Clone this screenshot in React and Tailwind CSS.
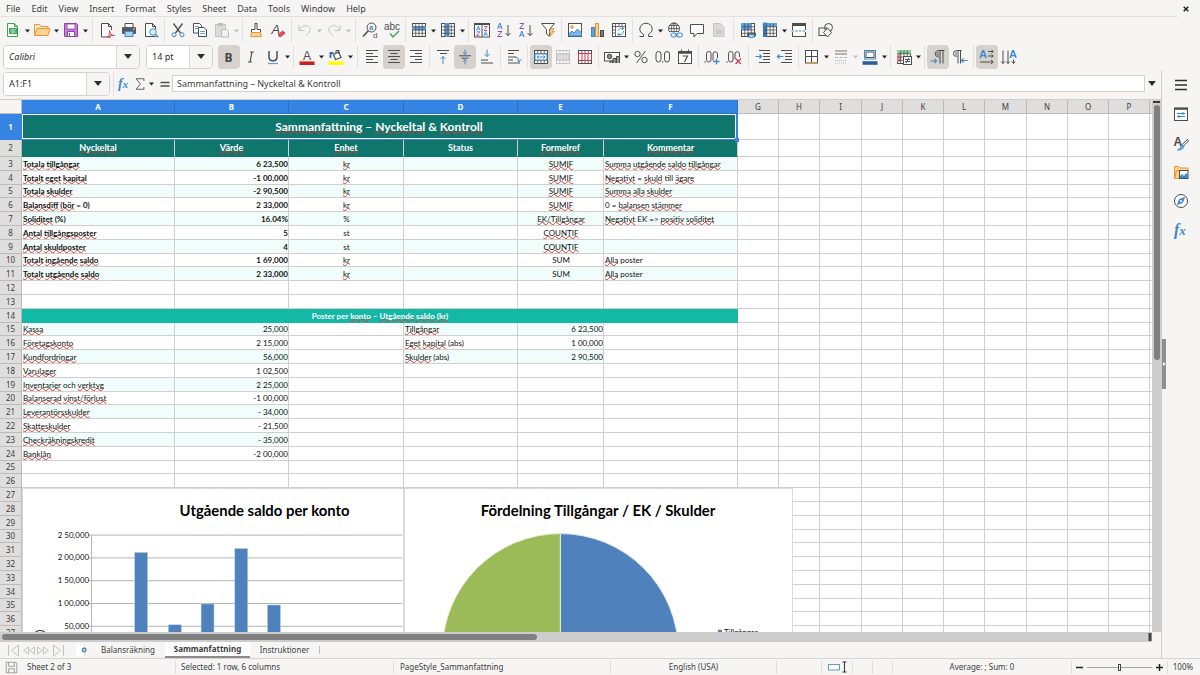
import React from "react";

const INK = "#4d4d4d";
const BLUE = "#3b8ad0";

/* ---------- icons ---------- */

function Svg({ children, size = 16 }) {
  return (
    <svg width={size} height={size} viewBox="0 0 16 16" fill="none" stroke={INK} strokeWidth="1" aria-hidden="true" className="shrink-0 overflow-visible">
      {children}
    </svg>
  );
}

function Txt({ x, y, s = 8, c = INK, w = 400, f = "Liberation Sans, sans-serif", children, ...rest }) {
  return (
    <text x={x} y={y} fontSize={s} fill={c} stroke="none" fontWeight={w} fontFamily={f} {...rest}>
      {children}
    </text>
  );
}

const Table = ({ c = INK, children }) => (
  <>
    <rect x="1.5" y="1.5" width="13" height="13" fill="#fff" stroke={c} />
    {children}
    <path d="M1.5 4.75h13M1.5 8h13M1.5 11.25h13M4.75 1.5v13M8 1.5v13M11.25 1.5v13" stroke={c} strokeWidth=".8" />
  </>
);

const ICONS = {
  newDoc: (
    <>
      <path d="M2.5 1.5h7l3 3v10h-10z" fill="#fff" stroke="#3aa757" />
      <path d="M9.5 1.5v3h3" fill="#8fd3a0" stroke="#3aa757" />
      <rect x="4" y="6" width="8" height="6" fill="#3aa757" stroke="none" />
      <path d="M5 8h6M5 10h6M8 6.500v5" stroke="#d6f1dc" strokeWidth=".7" />
    </>
  ),
  open: (
    <>
      <path d="M.5 13.500v-11h5l1.500 2h7v2" fill="#fbe3bd" stroke="#e8953a" />
      <path d="M.5 13.500l2.500-7h13l-2 7z" fill="#fad38f" stroke="#e8953a" />
    </>
  ),
  save: (
    <>
      <path d="M1.500 1.500h12l1 1v12h-13z" fill="#c47fd6" stroke="#953fae" />
      <rect x="4" y="2" width="8" height="5" fill="#fff" stroke="#953fae" strokeWidth=".8" />
      <path d="M4.500 14.500v-5h7v5z" fill="#fff" stroke="#953fae" />
      <path d="M6.500 11v3" stroke="#953fae" />
    </>
  ),
  pdf: (
    <>
      <path d="M12 15H2.500V1.500h7l3 3V8" fill="#fff" />
      <path d="M9.500 1.500v3h3" />
      <path d="M8 15.500c3-3 3-5 2.500-7 0 3 2 5 5 5-3-.5-5 .5-7.500 2z" fill="#f9c7cd" stroke="#d8344a" strokeWidth=".9" />
    </>
  ),
  print: (
    <>
      <path d="M4 5V1.500h8V5" fill="#fff" />
      <rect x="1" y="5" width="14" height="7" rx="1" fill="#5a5a5a" stroke="none" />
      <rect x="4" y="9.500" width="8" height="5" fill="#a9d1f2" stroke={BLUE} />
      <path d="M12 7h1.500" stroke="#fff" />
    </>
  ),
  preview: (
    <>
      <path d="M13 14.500H2.500v-13h7l3 3V7" fill="#fff" />
      <path d="M9.500 1.500v3h3" />
      <circle cx="10" cy="10" r="3.200" fill="#e4f1fc" stroke={BLUE} />
      <path d="M12.300 12.300l3 3" stroke={BLUE} strokeWidth="1.300" />
    </>
  ),
  cut: (
    <>
      <path d="M3.500 1.500l7 9.500M12.500 1.500l-7 9.500" strokeWidth="1.300" />
      <circle cx="4" cy="12.700" r="2" stroke={BLUE} />
      <circle cx="12" cy="12.700" r="2" stroke={BLUE} />
    </>
  ),
  copy: (
    <>
      <path d="M1.500 1.500h6l2 2v7.500h-8z" fill="#fff" />
      <path d="M6.500 5.500h5.500l2.500 2.500v6.500h-8z" fill="#fff" />
      <path d="M3 4.500h4M3 6.500h3M8 9.500h5M8 11.500h5" stroke={BLUE} strokeWidth=".8" />
    </>
  ),
  paste: (
    <>
      <rect x="1.500" y="2.500" width="10" height="12" fill="#dcdcdc" stroke="#c3c3c3" />
      <rect x="4" y="1" width="5" height="3" fill="#bbb" stroke="none" />
      <path d="M7.500 7.500h5l2 2v5.500h-7z" fill="#f2f2f2" stroke="#b9b9b9" />
    </>
  ),
  brush: (
    <>
      <path d="M7 1.500h2v6h3.500v3h-9v-3H7z" fill="#fff" />
      <path d="M2.500 14.500l1-4h9l1 4z" fill="#fad38f" stroke="#e8953a" />
    </>
  ),
  clear: (
    <>
      <Txt x="1.500" y="12" s="13" fontStyle="italic">A</Txt>
      <path d="M8.500 12.500l4-3.500 2.500 2-4 3.500h-2z" fill="#e8545d" stroke="#c9303b" strokeWidth=".8" />
    </>
  ),
  undo: <path d="M2 3v5.500h5.500M2.500 8c2-4 6-5.500 9-3.500s2 6-3 9.500" stroke="#c4c4c4" />,
  redo: <path d="M14 3v5.500H8.500M13.500 8c-2-4-6-5.500-9-3.500s-2 6 3 9.500" stroke="#c4c4c4" />,
  find: (
    <>
      <circle cx="9.500" cy="5.500" r="4.500" />
      <path d="M6.300 8.700L1 14.500" strokeWidth="1.600" />
      <Txt x="7.300" y="7.500" s="7" c={BLUE} w="700">a</Txt>
      <Txt x="11" y="15.500" s="8">d</Txt>
    </>
  ),
  spell: (
    <>
      <Txt x="0" y="8" s="10">abc</Txt>
      <path d="M6 11.500l3 3.500 6-6" stroke="#32a852" strokeWidth="1.400" />
    </>
  ),
  row: <Table><rect x="1" y="4.500" width="14" height="3.800" fill="#5ba4e6" stroke="none" /></Table>,
  col: <Table><rect x="5" y="1" width="4.500" height="14" fill="#5ba4e6" stroke="none" /></Table>,
  sort: (
    <>
      <rect x=".5" y="1.500" width="15" height="13.500" fill="#fff" />
      <path d="M.5 2h15" strokeWidth="2" />
      <path d="M8 2v13" />
      <path d="M2.500 8.500l1.800-4.500 1.800 4.500M3 7h2.600M9.800 13.800l1.800-4.300 1.800 4.300M10.300 12.400h2.600" stroke={BLUE} strokeWidth=".9" />
      <path d="M2.500 9.800h3.300l-3.300 4h3.300M10 4.500h3.300l-3.300 4h3.300" stroke="#a347ba" strokeWidth=".9" />
    </>
  ),
  az: (
    <>
      <path d="M1.500 7l2.300-6 2.300 6M2.200 5h3.200" stroke={BLUE} />
      <path d="M1.700 9.500h4.200l-4.200 5h4.400" stroke="#a347ba" />
      <path d="M12 3v10.500M9.500 11l2.500 2.700 2.500-2.700" />
    </>
  ),
  za: (
    <>
      <path d="M1.700 1.500h4.200l-4.200 5h4.400" stroke="#a347ba" />
      <path d="M1.500 15l2.300-6 2.300 6M2.200 13h3.200" stroke={BLUE} />
      <path d="M12 3v10.500M9.500 11l2.500 2.700 2.500-2.700" />
    </>
  ),
  filter: (
    <>
      <path d="M1.500 1.500h13l-5 6v7l-3-2.500v-4.500z" fill="#fff" />
      <path d="M11.500 6.500l-2.500 4h2l-1.500 4.500 5-5.500h-2.500l2-3z" fill="#fad38f" stroke="#e8953a" strokeWidth=".9" />
    </>
  ),
  image: (
    <>
      <rect x="1.500" y="1.500" width="13" height="13" fill="#fff" />
      <circle cx="5" cy="5" r="1.300" fill="#fad38f" stroke="#e8953a" />
      <path d="M2 14v-2l3-3 2 2 3.500-4 4 4v3z" fill="#7db7ea" stroke={BLUE} />
    </>
  ),
  chart: (
    <>
      <rect x="2.500" y="5.500" width="3" height="9" fill="#5ba4e6" stroke={BLUE} />
      <rect x="6.500" y="1.500" width="3" height="13" fill="#fad38f" stroke="#e8953a" />
      <rect x="11.500" y="8.500" width="3" height="6" fill="#777" />
    </>
  ),
  pivot: (
    <>
      <rect x="1.500" y="1.500" width="13" height="13" fill="#fff" />
      <path d="M1.500 4.500h13M4.500 1.500v13M8 1.500v3M11 1.500v3M1.500 8h3M1.500 11h3" strokeWidth=".8" />
      <path d="M7 8.500c.5-1.500 2-2 3.500-2h2M11 5l1.800 1.500L11 8M12.500 9c0 2-1.500 3.500-3.500 3.500H7M8.500 10.800L6.800 12.500l1.700 1.700" stroke={BLUE} />
    </>
  ),
  omega: <path d="M1.500 14.500h4v-2.200C3 11 1.800 9.300 1.800 7a6 5.600 0 0 1 12.400 0c0 2.300-1.200 4-3.700 5.300v2.200h4" />,
  link: (
    <>
      <circle cx="7" cy="6.500" r="5.500" />
      <path d="M1.500 6.500h11M7 1v11M2.500 3.500h9M2.500 9.500h9" strokeWidth=".8" />
      <ellipse cx="7" cy="6.500" rx="2.700" ry="5.500" strokeWidth=".8" />
      <rect x="3" y="10" width="13" height="6" fill="#f6f5f4" stroke="none" />
      <rect x="4" y="11" width="5.500" height="4" rx="2" stroke={BLUE} />
      <rect x="9.500" y="11" width="6" height="4" rx="2" stroke={BLUE} />
      <path d="M7.500 13h4" stroke={BLUE} />
    </>
  ),
  comment: <path d="M1.500 2.500h13v9H8l-3 3.500v-3.500H1.500z" fill="#fff" />,
  page: (
    <>
      <path d="M2.500 1.500h7l3.500 3.500v9.500H2.500z" fill="#dadada" stroke="#c6c6c6" />
      <path d="M5 9h6M5 11h6" stroke="#b9b9b9" />
    </>
  ),
  printArea: (
    <>
      <Table><rect x="1" y="1" width="10" height="7" fill="#5ba4e6" stroke="none" /></Table>
      <rect x="7" y="10.500" width="9" height="4" rx="1" fill="#5a5a5a" stroke="none" />
      <rect x="9" y="12.500" width="5" height="3" fill="#a9d1f2" stroke={BLUE} strokeWidth=".8" />
    </>
  ),
  freeze: (
    <>
      <Table>
        <rect x="1" y="1" width="14" height="3.800" fill="#5ba4e6" stroke="none" />
        <rect x="1" y="1" width="3.800" height="14" fill="#2f7ecb" stroke="none" />
      </Table>
      <path d="M3 0v6M.5 2.500h5M1 .5l4 4M5 .5l-4 4" stroke={BLUE} strokeWidth=".8" />
    </>
  ),
  split: (
    <>
      <rect x="1.500" y="2" width="13" height="12.500" fill="#fff" />
      <path d="M1 2.500h14" strokeWidth="3" />
      <path d="M1 9h14" stroke="#fff" strokeWidth="2" />
      <path d="M.5 9h15" stroke={BLUE} strokeDasharray="2.500 1.200" />
    </>
  ),
  shapes: (
    <>
      <rect x="1" y="6" width="8" height="7.500" />
      <circle cx="10.500" cy="5.500" r="4" />
      <path d="M9.500 6l4 4.500-4 4.500-4-4.500z" fill="#f6f5f4" />
    </>
  ),
  bold: <Txt x="3.500" y="12.500" s="12" w="700" c="#444" f="Noto Sans, sans-serif">B</Txt>,
  italic: <path d="M7 3h4M5 13h4M9 3L7 13" strokeWidth="1.200" />,
  underline: (
    <>
      <path d="M4 2v6c0 5 8 5 8 0V2" strokeWidth="1.500" />
      <path d="M3 14.500h10" stroke="#5ba4e6" strokeWidth="1.300" />
    </>
  ),
  fontColor: (
    <>
      <Txt x="4" y="10.500" s="12">A</Txt>
      <path d="M.5 14.200h15" stroke="#c9211e" strokeWidth="3.600" />
    </>
  ),
  fill: (
    <>
      <path d="M2.500 9V4h3" stroke="#2b6fb3" strokeWidth="1.800" />
      <path d="M5.500 5.500l5-2.500 2.500 5.500-5.500 2z" fill="#fff" strokeWidth="1.200" />
      <path d="M8 4V1.500h3V5" />
      <path d="M.5 14.200h15" stroke="#ffff00" strokeWidth="3.600" />
    </>
  ),
  alignL: <path d="M2 1.500h12M2 4.500h7M2 7.500h12M2 10.500h7M2 13.500h12" strokeWidth="1.100" />,
  alignC: <path d="M2 1.500h12M4.500 4.500h7M2 7.500h12M4.500 10.500h7M2 13.500h12" strokeWidth="1.100" />,
  alignR: <path d="M2 1.500h12M7 4.500h7M2 7.500h12M7 10.500h7M2 13.500h12" strokeWidth="1.100" />,
  vTop: (
    <>
      <path d="M2 1.500h12M5 4.500h7" />
      <path d="M8 15V7.500M5.500 10L8 7.500l2.500 2.500" stroke={BLUE} />
    </>
  ),
  vMid: (
    <>
      <path d="M2 6.800h12M4.500 9.200h7" />
      <path d="M8 .5v5M6 3.500l2 2 2-2M8 15.500v-5M6 12.500l2-2 2 2" stroke={BLUE} />
    </>
  ),
  vBot: (
    <>
      <path d="M2 14h12M2 11h7" />
      <path d="M8 .5v7M5.500 5L8 7.500 10.500 5" stroke={BLUE} />
    </>
  ),
  wrap: (
    <>
      <path d="M2 1.500h11M2 4.500h6M2 8h8M2 11h5M2 14h12" />
      <path d="M9 8c3 0 4 2 4 4.500M10.800 10.500l2.200 2.500 2.200-2.500" stroke={BLUE} />
    </>
  ),
  merge: (
    <>
      <Table />
      <rect x="2" y="5" width="12" height="6" fill="#fff" stroke={BLUE} />
      <path d="M4 8h8M5.500 6.500L4 8l1.500 1.500M10.500 6.500L12 8l-1.500 1.500" stroke={BLUE} />
    </>
  ),
  mergeOff: (
    <>
      <Table c="#c3c3c3" />
      <rect x="2" y="5" width="12" height="6" fill="#dcdcdc" stroke="#c3c3c3" />
    </>
  ),
  unmerge: (
    <>
      <Table />
      <rect x="1.500" y="4.500" width="13" height="7" fill="#fff" stroke="#d8344a" />
      <path d="M5 4.500v7M8 4.500v7M11 4.500v7" stroke="#d8344a" />
    </>
  ),
  money: (
    <>
      <rect x=".5" y="3.500" width="15" height="8.500" fill="#fff" />
      <circle cx="5.500" cy="7.500" r="2.300" fill="#888" />
      <path d="M9 14V9.500h3V14M12.500 14V7.500h3V14M6 14v-2h3v2" fill="#999" />
    </>
  ),
  percent: (
    <>
      <circle cx="4.500" cy="5" r="2.700" />
      <circle cx="11.500" cy="11" r="2.700" />
      <path d="M12.500 2l-9 12" />
    </>
  ),
  decimal: (
    <>
      <rect x="1" y="2.500" width="5" height="10.500" rx="2.500" />
      <rect x="9.500" y="2.500" width="5" height="10.500" rx="2.500" />
      <path d="M7.300 13h1" strokeWidth="1.300" />
    </>
  ),
  date: (
    <>
      <rect x="1.500" y="2.500" width="13" height="12" fill="#fff" />
      <path d="M1.500 3.500h13" strokeWidth="2.500" />
      <path d="M4.500 .5v3M11.500 .5v3" />
      <path d="M5.500 7h5L7.500 13" strokeWidth="1.200" />
    </>
  ),
  addDec: (
    <>
      <path d="M.5 13h1" strokeWidth="1.300" />
      <rect x="2.500" y="2.500" width="4.500" height="10.500" rx="2.200" />
      <path d="M13.500 9V5a2.200 2.200 0 0 0-4.500 0v5.500c0 1 .5 2 1.200 2.300" />
      <path d="M12.500 9.500v6M9.500 12.500h6" stroke={BLUE} strokeWidth="1.300" />
    </>
  ),
  delDec: (
    <>
      <path d="M.5 13h1" strokeWidth="1.300" />
      <rect x="2.500" y="2.500" width="4.500" height="10.500" rx="2.200" />
      <path d="M13.500 8V5a2.200 2.200 0 0 0-4.500 0v5" />
      <path d="M9.500 9.500l5.500 5.500M15 9.500L9.500 15" stroke="#d8344a" strokeWidth="1.200" />
    </>
  ),
  indent: (
    <>
      <path d="M4 1.500h11M8 4.500h7M8 7.500h7M8 10.500h7M4 13.500h11" />
      <path d="M.5 7.500h6M4.500 5.500l2 2-2 2" stroke={BLUE} strokeWidth="1.200" />
    </>
  ),
  outdent: (
    <>
      <path d="M4 1.500h11M8 4.500h7M8 7.500h7M8 10.500h7M4 13.500h11" />
      <path d="M6.500 7.500h-6M2.500 5.500l-2 2 2 2" stroke={BLUE} strokeWidth="1.200" />
    </>
  ),
  borders: (
    <>
      <rect x="1.500" y="1.500" width="12" height="12.500" fill="#fff" />
      <path d="M7.500 1.500v12M1.500 7.500h12" />
      <path d="M1.500 14h12" stroke="#e8953a" />
    </>
  ),
  lineStyle: (
    <>
      <path d="M2 2h12M2 5h12" stroke="#b3b3b3" strokeWidth="1.800" />
      <path d="M2 8.500h12" stroke="#b3b3b3" strokeDasharray="3 1.500" />
      <path d="M2 11.500h12M2 14h12" stroke="#b3b3b3" strokeDasharray="1 1" />
    </>
  ),
  lineColor: (
    <>
      <path d="M.5 14h15" stroke="#2a6099" strokeWidth="3.600" />
      <rect x="2.500" y="1.500" width="11" height="8.500" fill="#fff" stroke={BLUE} />
      <rect x="4" y="3" width="8" height="5.500" />
    </>
  ),
  conditional: (
    <>
      <Table>
        <rect x="1" y="1" width="14" height="4" fill="#8fd3a0" stroke="none" />
        <rect x="1" y="5" width="4" height="8" fill="#ee8b93" stroke="none" />
      </Table>
      <rect x="7.500" y="7.500" width="8" height="8" fill="#fff" />
      <path d="M9 10.500h5M9 12.500h5M13 9l-3 5" />
    </>
  ),
  ltr: (
    <>
      <path d="M14.500 1.500h-6a3 3 0 0 0 0 6.500h1M10 1.500v13M13 1.500v13" />
      <path d="M6 2.500v5h3v-5z" fill="#999" stroke="none" />
      <path d="M.5 12h6M4.500 10l2 2-2 2" stroke={BLUE} strokeWidth="1.200" />
    </>
  ),
  rtl: (
    <>
      <path d="M9.500 1.500h-5a3 3 0 0 0 0 6h1M6 1.500v13M8.500 1.500v13" />
      <path d="M3 2.500h3v5H3z" fill="#aaa" stroke="none" />
      <path d="M15.500 11.500h-6M11.500 9.500l-2 2 2 2" stroke={BLUE} strokeWidth="1.200" />
    </>
  ),
  horiz: (
    <>
      <Txt x="0" y="9" s="11" c={BLUE} w="700">A</Txt>
      <path d="M9 2.500h5M9 7h5M12.500 1l1.800 1.500-1.800 1.500M12.500 5.500L14.300 7l-1.800 1.500M1 13h13M12 11l2.300 2-2.300 2" />
    </>
  ),
  vert: (
    <>
      <Txt x="8" y="9" s="11" c={BLUE} w="700">A</Txt>
      <path d="M2 1.500v13M.3 12.500L2 14.500l1.700-2M7 1.500v13M5.300 12.500l1.700 2 1.700-2M12.500 10.500v4M10.800 12.500l1.700 2 1.700-2" />
    </>
  ),
  menu: <path d="M2 3.500h12M2 8h12M2 12.500h12" stroke="#2e2e2e" strokeWidth="1.500" />,
  properties: (
    <>
      <rect x="1.500" y="2" width="13" height="12.500" fill="#fff" />
      <path d="M1 2.800h14" strokeWidth="2" />
      <path d="M4 7.500h8M4 10.500h8M10 6v3M6 9v3" stroke={BLUE} />
    </>
  ),
  stylesPanel: (
    <>
      <Txt x=".5" y="11" s="12" w="700">A</Txt>
      <path d="M14.500 4.500L9 9.500l1.500 1.500L15.500 6z" fill="#fff" />
      <path d="M4.500 15c3 0 3-5 5-5s2.500 5-5 5z" fill="#7db7ea" stroke={BLUE} />
    </>
  ),
  gallery: (
    <>
      <path d="M1.500 14.500v-12h4l1.500 1.500h8v3" fill="#fad38f" stroke="#e8953a" />
      <path d="M1.500 14.500l2-8h4v8z" fill="#fad38f" stroke="#e8953a" />
      <rect x="6.500" y="6.500" width="8.500" height="8" fill="#fff" />
      <path d="M7 14v-2l2-2 2 2 2-3 2 2v3z" fill="#3b8ad0" stroke="none" />
    </>
  ),
  navigator: (
    <>
      <circle cx="8" cy="8" r="6.500" fill="#fff" />
      <path d="M11.500 4.500L9.500 9.500 4.500 11.500 6.500 6.500z" fill={BLUE} stroke={BLUE} />
      <circle cx="8" cy="8" r="1" fill="#fff" stroke="none" />
    </>
  ),
  fx: (
    <Txt x="1" y="12.500" s="16" c={BLUE} f="Liberation Serif, serif" fontStyle="italic" w="700">
      f<tspan fontSize="13">x</tspan>
    </Txt>
  ),
  sigma: <path d="M12.500 4.500V2H3.500l5 6-5 6h9v-2.500" />,
  equals: <path d="M2 6h12M2 10.500h12" strokeWidth="2" />,
  addSheet: (
    <>
      <path d="M1 1h7l3 3v11H1z" fill="#fff" stroke="none" />
      <path d="M11 4v11" stroke="#bbb" strokeWidth=".7" />
      <circle cx="10.500" cy="8" r="2.800" fill="#3b6fb8" stroke="none" />
      <path d="M8.700 8h3.600M10.500 6.200v3.600" stroke="#fff" strokeWidth=".9" />
    </>
  ),
};

function IconButton({ name, label, active, disabled }) {
  return (
    <button
      type="button"
      aria-label={label}
      aria-pressed={active ? true : undefined}
      disabled={disabled}
      className={"flex h-6 w-[22px] shrink-0 items-center justify-center rounded " + (active ? "bg-[#d5d1cd]" : "")}
    >
      <Svg>{ICONS[name]}</Svg>
    </button>
  );
}

function Caret({ label, disabled }) {
  return (
    <button type="button" aria-label={label + " options"} disabled={disabled} className="flex h-6 w-[7px] shrink-0 items-center justify-center">
      <svg width="5" height="4" viewBox="0 0 5 4" aria-hidden="true" className="mt-px">
        <path d="M0 .5h5L2.500 3.500z" fill={disabled ? "#bdbdbd" : "#222"} />
      </svg>
    </button>
  );
}

function Sep({ wide }) {
  return (
    <span className={"flex h-6 shrink-0 justify-center " + (wide ? "w-[7px]" : "w-[5px]")}>
      <span className="w-px bg-[#e3e1df]" />
    </span>
  );
}

/* Each entry: [icon, label, flags]; flags: c = caret, a = active, d = disabled */
function Tools({ items }) {
  return items.map((it, i) => {
    if (it === "|") return <Sep key={i} />;
    if (it === "||") return <Sep key={i} wide />;
    const [name, label, flags = ""] = it;
    const disabled = flags.includes("d");
    return (
      <React.Fragment key={i}>
        <IconButton name={name} label={label} active={flags.includes("a")} disabled={disabled} />
        {flags.includes("c") && <Caret label={label} disabled={disabled} />}
      </React.Fragment>
    );
  });
}

const STANDARD = [
  ["newDoc", "New", "c"], ["open", "Open", "c"], ["save", "Save", "c"], "||",
  ["pdf", "Export as PDF"], ["print", "Print"], ["preview", "Print Preview"], "|",
  ["cut", "Cut"], ["copy", "Copy"], ["paste", "Paste", "cd"], "|",
  ["brush", "Clone Formatting"], ["clear", "Clear Formatting"], "|",
  ["undo", "Undo", "cd"], ["redo", "Redo", "cd"], "||",
  ["find", "Find and Replace"], ["spell", "Spelling"], "|",
  ["row", "Row", "c"], ["col", "Column", "c"], "|",
  ["sort", "Sort"], ["az", "Sort Ascending"], ["za", "Sort Descending"], ["filter", "AutoFilter"], "|",
  ["image", "Insert Image"], ["chart", "Insert Chart"], ["pivot", "Insert Pivot Table"], "|",
  ["omega", "Special Characters", "c"], ["link", "Insert Hyperlink"], ["comment", "Insert Comment"], ["page", "Headers and Footers", "d"], "||",
  ["printArea", "Print Area"], ["freeze", "Freeze Panes", "c"], ["split", "Split Window"], "|",
  ["shapes", "Show Draw Functions"],
];

const FORMATTING = [
  ["bold", "Bold", "a"], ["italic", "Italic"], ["underline", "Underline", "c"], "|",
  ["fontColor", "Font Color", "c"], ["fill", "Background Color", "c"], "||",
  ["alignL", "Align Left"], ["alignC", "Align Center", "a"], ["alignR", "Align Right"], "|",
  ["vTop", "Align Top"], ["vMid", "Center Vertically", "a"], ["vBot", "Align Bottom"], "|",
  ["wrap", "Wrap Text"], "|",
  ["merge", "Merge and Center", "a"], ["mergeOff", "Merge Cells", "d"], ["unmerge", "Unmerge Cells"], "|",
  ["money", "Currency", "c"], ["percent", "Percent"], ["decimal", "Number"], ["date", "Date"], "|",
  ["addDec", "Add Decimal Place"], ["delDec", "Delete Decimal Place"], "||",
  ["indent", "Increase Indent"], ["outdent", "Decrease Indent"], "|",
  ["borders", "Borders", "c"], ["lineStyle", "Border Style", "cd"], ["lineColor", "Border Color", "c"], "|",
  ["conditional", "Conditional Formatting", "c"], "|",
  ["ltr", "Left-To-Right", "a"], ["rtl", "Right-To-Left"], "|",
  ["horiz", "Text direction left to right", "a"], ["vert", "Text direction top to bottom"],
];

function Combo({ label, value, italic, width }) {
  return (
    <div className={"flex h-6 shrink-0 overflow-hidden rounded border border-[#d3d0cd] bg-white " + width}>
      <input aria-label={label} defaultValue={value} className={"min-w-0 flex-1 bg-white px-[5px] text-[9px] text-[#2e2e2e] outline-none " + (italic ? "italic" : "")} />
      <button type="button" aria-label={label + " list"} className="flex w-[23px] shrink-0 items-center justify-center border-l border-[#d9d6d3] bg-[#f6f5f4]">
        <svg width="8" height="5" viewBox="0 0 8 5" aria-hidden="true"><path d="M0 0h8L4 5z" fill="#2e2e2e" /></svg>
      </button>
    </div>
  );
}

/* ---------- sheet data ---------- */

const KNOWN = new Set(["=", "=>", "0", "0)", "(%)", "till", "och", "–", "&", "per", "(abs)", "poster", "Poster", "SUM", "st", "%", "Status", "EK"]);

function Spell({ text }) {
  return text.split(" ").map((word, i) => (
    <React.Fragment key={i}>
      {i > 0 && " "}
      {KNOWN.has(word) || /^[-\d,.%]+$/.test(word) ? (
        word
      ) : (
        <span className="underline decoration-[#e0342b] decoration-wavy decoration-1 [text-decoration-skip-ink:none] [text-underline-offset:-1px]">{word}</span>
      )}
    </React.Fragment>
  ));
}

const DATA = {
  3: ["Totala tillgångar", "6 23,500", "kr", "", "SUMIF", "Summa utgående saldo tillgångar"],
  4: ["Totalt eget kapital", "-1 00,000", "kr", "", "SUMIF", "Negativt = skuld till ägare"],
  5: ["Totala skulder", "-2 90,500", "kr", "", "SUMIF", "Summa alla skulder"],
  6: ["Balansdiff (bör = 0)", "2 33,000", "kr", "", "SUMIF", "0 = balansen stämmer"],
  7: ["Soliditet (%)", "16.04%", "%", "", "EK/Tillgångar", "Negativt EK => positiv soliditet"],
  8: ["Antal tillgångsposter", "5", "st", "", "COUNTIF", ""],
  9: ["Antal skuldposter", "4", "st", "", "COUNTIF", ""],
  10: ["Totalt ingående saldo", "1 69,000", "kr", "", "SUM", "Alla poster"],
  11: ["Totalt utgående saldo", "2 33,000", "kr", "", "SUM", "Alla poster"],
  15: ["Kassa", "25,000", "", "Tillgångar", "6 23,500", ""],
  16: ["Företagskonto", "2 15,000", "", "Eget kapital (abs)", "1 00,000", ""],
  17: ["Kundfordringar", "56,000", "", "Skulder (abs)", "2 90,500", ""],
  18: ["Varulager", "1 02,500", "", "", "", ""],
  19: ["Inventarier och verktyg", "2 25,000", "", "", "", ""],
  20: ["Balanserad vinst/förlust", "-1 00,000", "", "", "", ""],
  21: ["Leverantörsskulder", "- 34,000", "", "", "", ""],
  22: ["Skatteskulder", "- 21,500", "", "", "", ""],
  23: ["Checkräkningskredit", "- 35,000", "", "", "", ""],
  24: ["Banklån", "-2 00,000", "", "", "", ""],
};

const COLS = "ABCDEFGHIJKLMNOP".split("");
const COL_W = [
  "w-[153px]", "w-[114px]", "w-[115px]", "w-[114px]", "w-[86px]", "w-[134px]",
  "w-[41px]", "w-[41px]", "w-[42px]", "w-[41px]", "w-[41px]", "w-[41px]", "w-[42px]", "w-[41px]", "w-[41px]", "w-[41px]",
];
const TOP_ALIGN = ["text-left font-bold", "text-right font-bold", "text-center", "text-center", "text-center", "text-left"];
const LOW_ALIGN = ["text-left", "text-right", "text-center", "text-left", "text-right", "text-left"];
const GRID = "border-r border-b border-[#cfcfcf] ";
const LAST_ROW = 37;

function tinted(row, col) {
  if (row >= 3 && row <= 11) return row % 2 === 1;
  if (row >= 15 && row <= 24 && row % 2 === 1) return col < 2 || (row <= 17 && (col === 3 || col === 4));
  return false;
}

function RowHead({ n, active, height }) {
  return (
    <th scope="row" className={"border-r border-b p-0 text-center text-[8px] leading-[12px] " + height + (active ? " border-[#3584e4] bg-[#3584e4] font-bold text-white" : " border-[#bdbcba] bg-[#dfdedc] font-normal text-[#3d3d3d]")}>
      {n}
    </th>
  );
}

function Blanks({ from }) {
  return (
    <>
      {COLS.slice(from).map((c) => <td key={c} className={GRID + "bg-white p-0"} />)}
      <td className="border-b border-[#cfcfcf] bg-white p-0" />
    </>
  );
}

function SheetRow({ n }) {
  const height = n % 5 === 0 ? "h-[13px]" : "h-[14px]";
  if (n === 14) {
    return (
      <tr>
        <RowHead n={n} height={height} />
        <td colSpan={6} className="bg-[#14b8a6] p-0 text-center font-['Lato',sans-serif] text-[8px] leading-[12px] font-bold text-white">
          <Spell text="Poster per konto – Utgående saldo (kr)" />
        </td>
        <Blanks from={6} />
      </tr>
    );
  }
  const cells = DATA[n];
  return (
    <tr>
      <RowHead n={n} height={height} />
      {COLS.slice(0, 6).map((c, i) => (
        <td key={c} className={GRID + "overflow-hidden pr-0 pl-px py-0 font-['Lato',sans-serif] text-[8px] leading-[12px] whitespace-nowrap text-[#111] " + (n < 14 ? TOP_ALIGN : LOW_ALIGN)[i] + (tinted(n, i) ? " bg-[#f0fdfa]" : " bg-white")}>
          {cells && cells[i] ? <Spell text={cells[i]} /> : null}
        </td>
      ))}
      <Blanks from={6} />
    </tr>
  );
}

function Grid() {
  const rows = [];
  for (let n = 3; n <= LAST_ROW; n++) rows.push(<SheetRow key={n} n={n} />);
  return (
    <table className="w-full table-fixed border-separate border-spacing-0">
      <colgroup>
        <col className="w-[22px]" />
        {COL_W.map((w, i) => <col key={i} className={w} />)}
        <col />
      </colgroup>
      <thead>
        <tr>
          <th aria-label="Select all" className="h-[14px] border-r border-b border-[#bdbcba] bg-[#f6f5f4] p-0" />
          {COLS.map((c, i) => (
            <th key={c} scope="col" className={"h-[14px] border-r border-b p-0 text-[8px] leading-[12px] " + (i < 6 ? "border-[#2a6fc9] bg-[#3584e4] font-bold text-white" : "border-[#bdbcba] bg-[#dfdedc] font-normal text-[#3d3d3d]")}>
              {c}
            </th>
          ))}
          <th className="border-b border-[#bdbcba] bg-[#dfdedc] p-0" />
        </tr>
      </thead>
      <tbody>
        <tr>
          <RowHead n={1} active height="h-[26px]" />
          <td colSpan={6} className="relative border-r-2 border-b border-[#3584e4] bg-[#0f766e] p-0 text-center font-['Lato',sans-serif] text-[12px] leading-[16px] font-bold text-white ring-1 ring-white ring-inset">
            <Spell text="Sammanfattning – Nyckeltal & Kontroll" />
            <span className="absolute -right-[3px] -bottom-[3px] z-10 size-1 bg-[#3584e4]" />
          </td>
          <Blanks from={6} />
        </tr>
        <tr>
          <RowHead n={2} height="h-[17px]" />
          {["Nyckeltal", "Värde", "Enhet", "Status", "Formelref", "Kommentar"].map((t) => (
            <td key={t} className="border-r border-b border-r-[#cfcfcf] border-b-[#0f766e] bg-[#0f766e] p-0 text-center font-['Lato',sans-serif] text-[9px] leading-[12px] font-bold text-white">
              <Spell text={t} />
            </td>
          ))}
          <Blanks from={6} />
        </tr>
        {rows}
      </tbody>
    </table>
  );
}

/* ---------- charts ---------- */

const CHART_FONT = "Lato, sans-serif";
const TICKS = [["2 50,000", 47], ["2 00,000", 70], ["1 50,000", 93], ["1 00,000", 116], ["50,000", 139]];
const BARS = [[112, 64], [146, 137], [179, 116], [213, 60], [246, 117]];

function BarChart() {
  return (
    <svg width="382" height="230" viewBox="0 0 382 230" className="block border border-[#d9d9d9] bg-white" role="img" aria-label="Utgående saldo per konto">
      <text x="243" y="27" textAnchor="middle" fontSize="15" fontWeight="700" fontFamily={CHART_FONT}>Utgående saldo per konto</text>
      <path d="M68.500 47v183" stroke="#b3b3b3" />
      {TICKS.map(([label, y]) => (
        <g key={label}>
          <path d={`M65 ${y - 0.5}h317`} stroke="#b3b3b3" />
          <text x="66" y={y + 2} textAnchor="end" fontSize="8" fill="#111" fontFamily={CHART_FONT}>{label}</text>
        </g>
      ))}
      {BARS.map(([x, y]) => (
        <rect key={x} x={x} y={y} width="13" height={230 - y} fill="#4f81bd" stroke="#b9cde5" strokeWidth=".5" />
      ))}
      <text transform="translate(20 142) rotate(-90)" textAnchor="end" fontSize="9" fontWeight="700" fontFamily={CHART_FONT}>(kr)</text>
    </svg>
  );
}

function PieChart() {
  return (
    <svg width="389" height="230" viewBox="0 0 389 230" className="block border border-[#d9d9d9] bg-white" role="img" aria-label="Fördelning Tillgångar / EK / Skulder">
      <text x="194" y="27" textAnchor="middle" fontSize="15" fontWeight="700" fontFamily={CHART_FONT}>Fördelning Tillgångar / EK / Skulder</text>
      <path d="M156 164V45a119 119 0 0 1 119 119z" fill="#4f81bd" stroke="#dbe5f1" />
      <path d="M156 164V45a119 119 0 0 0-119 119z" fill="#9bbb59" stroke="#e6efd5" />
      <rect x="315" y="142" width="4" height="4" fill="#4f81bd" />
      <text x="321" y="147" fontSize="8" fill="#111" fontFamily={CHART_FONT}>Tillgångar</text>
    </svg>
  );
}

/* ---------- page ---------- */

const MENUS = ["File", "Edit", "View", "Insert", "Format", "Styles", "Sheet", "Data", "Tools", "Window", "Help"];
const PANELS = [["menu", "Sidebar Settings"], ["properties", "Properties"], ["stylesPanel", "Styles"], ["gallery", "Gallery"], ["navigator", "Navigator"], ["fx", "Functions"]];

function TabNav() {
  const arrows = [["First sheet", "M2 1v11M12 1L5 6.500l7 5.500z"], ["Previous sheet", "M7 3L2 6.500 7 10zM13 3L8 6.500l5 3.500z"], ["Next sheet", "M1 3l5 3.500L1 10zM7 3l5 3.500L7 10z"], ["Last sheet", "M12 1v11M2 1l7 5.500L2 12z"]];
  return (
    <div className="flex w-[64px] shrink-0 pl-1">
      {arrows.map(([label, d]) => (
        <button key={label} type="button" aria-label={label} className="flex w-[15px] items-center justify-center">
          <svg width="15" height="13" viewBox="0 0 14 13" aria-hidden="true"><path d={d} fill="none" stroke="#c4c2c0" /></svg>
        </button>
      ))}
    </div>
  );
}

function StatusBar() {
  return (
    <footer className="flex h-[17px] shrink-0 items-center border-t border-[#d5d3d1] text-[8px] text-[#3d3d3d]">
      <div className="flex w-[175px] items-center gap-[9px] pl-[5px]">
        <svg width="13" height="13" viewBox="0 0 16 16" fill="none" stroke="#8e8e8e" aria-hidden="true">
          <path d="M1.500 1.500h12l1 1v12h-13zM4.500 1.500v5h7v-5M4.500 14.500v-5h7v5" />
        </svg>
        Sheet 2 of 3
      </div>
      <div className="h-3 w-[218px] border-l border-[#e0dedc] pl-[5px] leading-[12px]">Selected: 1 row, 6 columns</div>
      <div className="h-3 w-[217px] border-l border-[#e0dedc] pl-[6px] leading-[12px]">PageStyle_Sammanfattning</div>
      <div className="h-3 w-[166px] border-l border-[#e0dedc] text-center leading-[12px]">English (USA)</div>
      <div className="h-3 w-[45px] border-l border-[#e0dedc]" />
      <div className="flex h-3 w-[31px] items-center border-l border-[#e0dedc] pl-[6px]">
        <svg width="22" height="12" viewBox="0 0 22 12" fill="none" aria-hidden="true" className="shrink-0">
          <rect x=".5" y="3.500" width="11" height="5.500" fill="#fff" stroke="#5a9fc9" />
          <path d="M14.500 1h4M14.500 11h4M16.500 1v10" stroke="#333" />
        </svg>
      </div>
      <div className="h-3 w-5 border-l border-[#e0dedc]" />
      <div className="h-3 w-5 border-l border-[#e0dedc]" />
      <div className="h-3 flex-1 border-l border-[#e0dedc] text-center leading-[12px]">Average: ; Sum: 0</div>
      <div className="flex h-3 w-24 items-center border-l border-[#e0dedc] pl-1">
        <button type="button" aria-label="Zoom out" className="w-[7px]">
          <svg width="7" height="7" viewBox="0 0 7 7" aria-hidden="true"><path d="M0 3.500h7" stroke="#222" strokeWidth="1.500" /></svg>
        </button>
        <input
          type="range"
          aria-label="Zoom"
          defaultValue="50"
          className="mx-1 h-2 w-[65px] appearance-none bg-[linear-gradient(#a6a6a6,#a6a6a6)] bg-[length:100%_1px] bg-center bg-no-repeat [&::-webkit-slider-thumb]:h-[7px] [&::-webkit-slider-thumb]:w-[3px] [&::-webkit-slider-thumb]:appearance-none [&::-webkit-slider-thumb]:border [&::-webkit-slider-thumb]:border-[#444] [&::-webkit-slider-thumb]:bg-white"
        />
        <button type="button" aria-label="Zoom in" className="w-[7px]">
          <svg width="7" height="7" viewBox="0 0 7 7" aria-hidden="true"><path d="M0 3.500h7M3.500 0v7" stroke="#222" strokeWidth="1.500" /></svg>
        </button>
      </div>
      <div className="h-3 w-[33px] border-l border-[#e0dedc] pr-[2px] text-center leading-[12px]">100%</div>
    </footer>
  );
}

export default function App() {
  return (
    <div className="flex h-screen flex-col overflow-hidden bg-[#f6f5f4] font-['Noto_Sans',sans-serif] text-[9px] text-[#3d3d3d]">
      <header className="flex h-[17px] shrink-0 items-center">
        <nav aria-label="Menu bar" className="mr-[17px] flex h-full flex-1 items-center gap-[11px] border-b border-[#e3e1df] pt-px pl-[6px]">
          {MENUS.map((m) => <button key={m} type="button" className="leading-[15px]">{m}</button>)}
        </nav>
        <button type="button" aria-label="Close document" className="-ml-[11px] w-[17px]">
          <svg width="6" height="6" viewBox="0 0 6 6" aria-hidden="true"><path d="M.7.7l4.600 4.600M5.300.7L.7 5.300" stroke="#222" strokeWidth="1.500" /></svg>
        </button>
      </header>

      <div role="toolbar" aria-label="Standard" className="flex h-[26px] shrink-0 items-center pl-[2px]">
        <Tools items={STANDARD} />
      </div>
      <div role="toolbar" aria-label="Formatting" className="flex h-[27px] shrink-0 items-center pl-[3px]">
        <Combo label="Font Name" value="Calibri" italic width="w-[137px] mr-[6px]" />
        <Combo label="Font Size" value="14 pt" width="w-[67px] mr-[5px]" />
        <Tools items={FORMATTING} />
      </div>

      <div className="flex min-h-0 flex-1">
        <div className="flex min-w-0 flex-1 flex-col">
          <div className="flex h-[29px] shrink-0 items-center pb-[2px] pl-[3px]">
            <Combo label="Name Box" value="A1:F1" width="w-[107px] mr-[1px]" />
            <Sep />
            <button type="button" aria-label="Function Wizard" className="flex w-4 justify-center"><Svg size={14}>{ICONS.fx}</Svg></button>
            <button type="button" aria-label="Select Function" className="flex w-4 justify-center"><Svg size={14}>{ICONS.sigma}</Svg></button>
            <Caret label="Select Function" />
            <button type="button" aria-label="Formula" className="mr-px ml-1 flex w-3 justify-center"><Svg size={12}>{ICONS.equals}</Svg></button>
            <input aria-label="Input line" defaultValue="Sammanfattning – Nyckeltal & Kontroll" className="h-[17px] min-w-0 flex-1 border border-[#d3d0cd] bg-white px-1 text-[9px] outline-none" />
            <button type="button" aria-label="Expand Formula Bar" className="flex w-4 items-center justify-center pr-[2px]">
              <svg width="8" height="5" viewBox="0 0 8 5" aria-hidden="true"><path d="M0 0h8L4 5z" fill="#2e2e2e" /></svg>
            </button>
          </div>

          <div className="flex min-h-0 flex-1 border-t border-[#d0cecc]">
            <div className="flex min-w-0 flex-1 flex-col">
              <main className="relative min-h-0 flex-1 overflow-hidden">
                <Grid />
                <div className="absolute top-[388px] left-[22px] flex">
                  <BarChart />
                  <PieChart />
                </div>
              </main>
              <div className="flex h-[10px] shrink-0 items-center justify-between bg-[#cdcdcd] pl-[2px]">
                <div className="h-[6px] w-[46.5%] rounded-full bg-[#808080]" />
                <div className="h-[8px] w-1 border-x border-[#888] bg-[#444]" />
              </div>
            </div>
            <div className="mb-[10px] flex w-[9px] shrink-0 flex-col items-center bg-[#cdcdcd] pt-px">
              <div className="h-[2px] w-[7px] bg-[#3d3d3d]" />
              <div className="mt-[2px] h-[48%] w-[6px] rounded-full bg-[#808080]" />
            </div>
          </div>

          <div className="flex h-4 shrink-0 items-stretch pl-[2px] text-[8px]">
            <TabNav />
            <button type="button" aria-label="Add sheet" className="flex w-[25px] items-center justify-end pr-[2px]"><Svg size={14}>{ICONS.addSheet}</Svg></button>
            <div role="tablist" className="flex">
              <button type="button" role="tab" aria-selected="false" className="w-[74px]">Balansräkning</button>
              <button type="button" role="tab" aria-selected="true" className="w-[85px] border-b-2 border-[#8a8a8a] bg-white font-bold">Sammanfattning</button>
              <button type="button" role="tab" aria-selected="false" className="w-[69px]">Instruktioner</button>
              <span className="my-1 w-px bg-[#bdbcba]" />
            </div>
          </div>
        </div>

        <div className="flex w-1 shrink-0 flex-col justify-center border-l border-[#d0cecc]">
          <button type="button" aria-label="Hide sidebar" className="flex h-[50px] w-1 items-center justify-center bg-[#8f8f8f]">
            <svg width="3" height="4" viewBox="0 0 3 4" aria-hidden="true" className="shrink-0"><path d="M0 0l3 2L0 4z" fill="#fff" /></svg>
          </button>
        </div>
        <aside aria-label="Sidebar" className="flex w-[35px] shrink-0 flex-col items-center pr-[3px]">
          {PANELS.map(([icon, label]) => (
            <button key={icon} type="button" aria-label={label} className="flex h-[29px] items-center justify-center"><Svg>{ICONS[icon]}</Svg></button>
          ))}
        </aside>
      </div>

      <StatusBar />
    </div>
  );
}
